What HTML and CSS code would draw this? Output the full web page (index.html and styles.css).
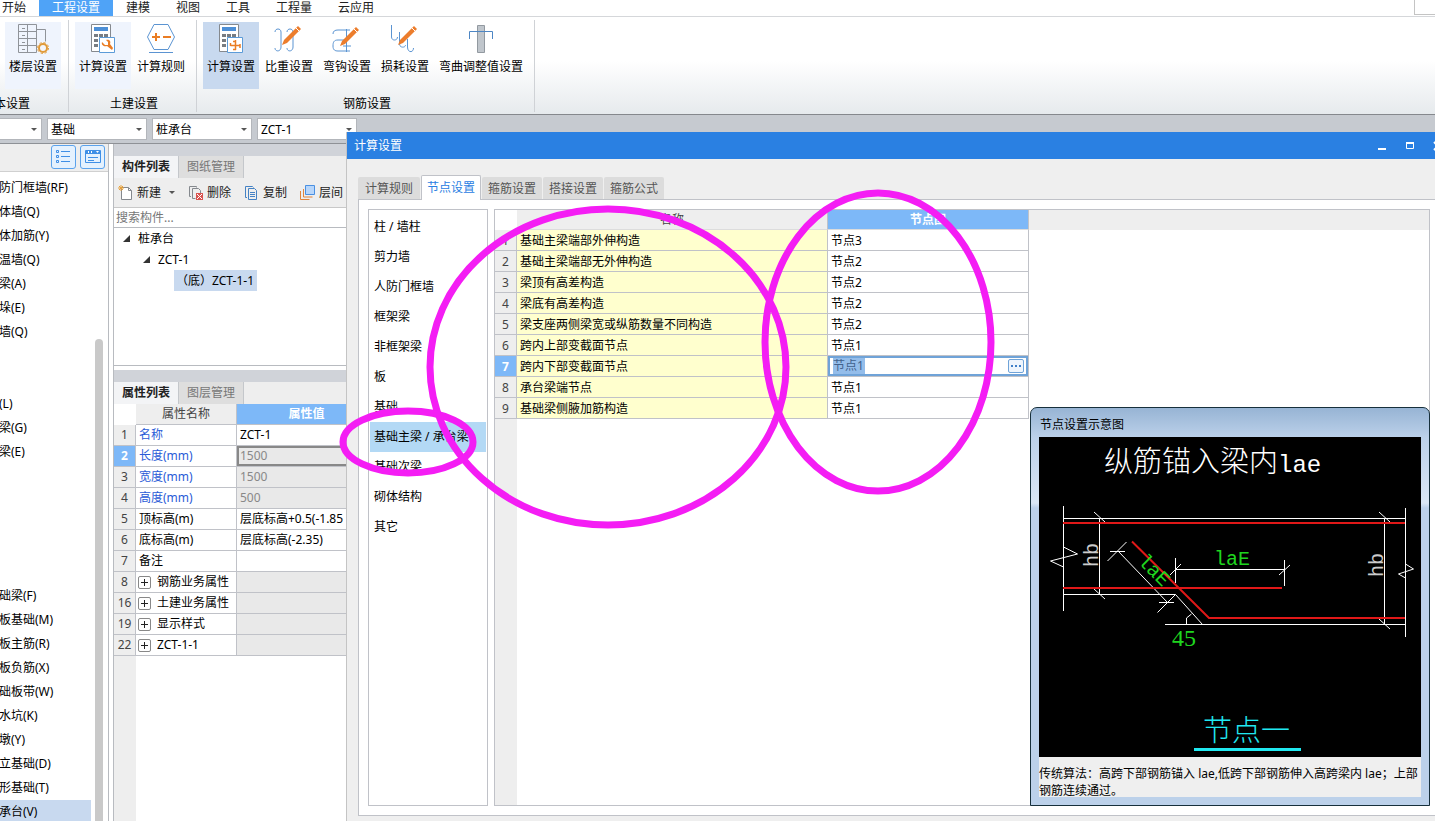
FILE: index.html
```html
<!DOCTYPE html>
<html lang="zh-CN">
<head>
<meta charset="utf-8">
<title>计算设置</title>
<link rel="stylesheet" href="styles.css">
</head>
<body>
<div class="app">
  <nav class="menu">
    <button class="menu-tab first">开始</button>
    <button class="menu-tab active">工程设置</button>
    <button class="menu-tab">建模</button>
    <button class="menu-tab">视图</button>
    <button class="menu-tab">工具</button>
    <button class="menu-tab">工程量</button>
    <button class="menu-tab">云应用</button>
    <span class="menu-box"></span>
  </nav>

  <div class="ribbon">
    <section class="group group-basic">
      <div class="tools">
        <button class="tool soft">
          <svg width="32" height="32" viewBox="0 0 32 32" fill="none" stroke="#8f9399"><path d="M1.500.5h18v28h-18zM10.500.5v28M1.500 7.500h18M1.500 14.500h18M1.500 21.500h18M19.500 5.500h9v12M5 4.500h3M5 11.500h3M5 18.500h3M5 25.500h3"/><circle cx="26" cy="24" r="6" fill="#f4f6fb" stroke="none"/><circle cx="26" cy="24" r="4" stroke="#e09a38" stroke-width="2"/><circle cx="26" cy="24" r="5.500" stroke="#e09a38" stroke-dasharray="2.300 2"/></svg>
          <span>楼层设置</span>
        </button>
      </div>
      <h2 class="group-name cut">本设置</h2>
    </section>
    <section class="group">
      <div class="tools">
        <button class="tool soft">
          <svg width="32" height="32" viewBox="0 0 32 32" fill="none"><path d="M4.500.5h19v27h-19z" fill="#fff" stroke="#85898e"/><path d="M7 3h14v4H7z" fill="#4d8fd6"/><path d="M7 10h4v3H7zM12 10h4v3h-4zM17 10h4v3h-4zM7 15h4v3H7zM7 20h4v3H7z" fill="#777c82"/><path d="M12.500 13.500h15v15h-15z" fill="#fff" stroke="#5b9bd8"/><path d="M15 18l3 3h3v-3l-2-2c4-1 5 2 4 4l3 4-1 2-5-4c-3 1-6-1-5-4z" fill="#ea7d24"/></svg>
          <span>计算设置</span>
        </button>
        <button class="tool">
          <svg width="32" height="32" viewBox="0 0 32 32" fill="none"><path d="M9 .5h14l6.500 12.500L23 25.500H9L2.500 13zM4 28.500h24" stroke="#5b94d2"/><path d="M7 13h8M11 9v8M18 13h8" stroke="#ea7d24" stroke-width="2"/></svg>
          <span>计算规则</span>
        </button>
      </div>
      <h2 class="group-name">土建设置</h2>
    </section>
    <section class="group">
      <div class="tools">
        <button class="tool on">
          <svg width="32" height="32" viewBox="0 0 32 32" fill="none"><path d="M4.500.5h19v27h-19z" fill="#fff" stroke="#85898e"/><path d="M7 3h14v4H7z" fill="#4d8fd6"/><path d="M7 10h4v3H7zM12 10h4v3h-4zM17 10h4v3h-4zM7 15h4v3H7zM7 20h4v3H7z" fill="#777c82"/><path d="M12.500 13.500h15v15h-15z" fill="#fff" stroke="#5b9bd8"/><path d="M20.500 16v10M15.500 21.500h10M18 17.500h3M15.500 19v3M25 20v4M18 25.500h3" stroke="#ea7d24" stroke-width="1.500"/></svg>
          <span>计算设置</span>
        </button>
        <button class="tool">
          <svg width="32" height="32" viewBox="0 0 32 32" fill="none"><path d="M2 8c0-4 6-4 6 0v15c0 5-6 5-6 1M14 8c0-4 6-4 6 0v15c0 5-6 5-6 1" stroke="#5b94d2"/><path d="M9 21l2-5L25 2l3 3-14 14z" fill="#ec7d2c"/><path d="M23 4l3 3" stroke="#fff"/></svg>
          <span>比重设置</span>
        </button>
        <button class="tool">
          <svg width="32" height="32" viewBox="0 0 32 32" fill="none"><path d="M2 10c0-3 2-4 5-4h12M7 16h10M2 22c0-4 1-6 5-6M2 22c0 4 2 5 5 5h12M15.500 5v23M12 22h8" stroke="#5b94d2"/><path d="M9 22l2-5L25 3l3 3-14 14z" fill="#ec7d2c"/><path d="M23 5l3 3" stroke="#fff"/></svg>
          <span>弯钩设置</span>
        </button>
        <button class="tool">
          <svg width="32" height="32" viewBox="0 0 32 32" fill="none"><path d="M2.500 1v12c0 4 6 4 6 0M10.500 8v12c0 4 6 4 6 1M18.500 15v8c0 6 6 6 6 1" stroke="#5b94d2"/><path d="M9 21l2-5L25 2l3 3-14 14z" fill="#ec7d2c"/><path d="M23 4l3 3" stroke="#fff"/></svg>
          <span>损耗设置</span>
        </button>
        <button class="tool wide">
          <svg width="32" height="32" viewBox="0 0 32 32" fill="none"><path d="M12.500 1.500h7v27h-7z" fill="#c0c6cc" stroke="#9299a0"/><path d="M4.500 15V7.500h23V15" stroke="#4d86c4"/></svg>
          <span>弯曲调整值设置</span>
        </button>
      </div>
      <h2 class="group-name">钢筋设置</h2>
    </section>
  </div>

  <div class="filters">
    <label class="combo narrow"><select aria-label="楼层"><option></option></select></label>
    <label class="combo"><select aria-label="类别"><option>基础</option></select></label>
    <label class="combo"><select aria-label="构件类型"><option>桩承台</option></select></label>
    <label class="combo"><select aria-label="构件"><option>ZCT-1</option></select></label>
  </div>

  <div class="work">
    <aside class="side">
      <div class="side-head">
        <button class="view" aria-label="列表"><svg width="16" height="16" viewBox="0 0 16 16" fill="none" stroke="#3f8fe6"><path d="M.5 1.500h2v2h-2zM.5 6.500h2v2h-2zM.5 11.500h2v2h-2zM5 2.500h9M5 7.500h9M5 12.500h9"/></svg></button>
        <button class="view" aria-label="面板"><svg width="16" height="16" viewBox="0 0 16 16" fill="none" stroke="#3f8fe6"><path d="M.5 1.500h15v12H.5z"/><path d="M1 3h14" stroke-width="4"/><path d="M3 8.500h10M3 11.500h6"/><path d="M3 2h1v2H3zM6 2h1v2H6zM11 2h3l-1.500 2z" fill="#fff" stroke="none"/></svg></button>
      </div>
      <div class="side-body">
        <ul class="side-list">
          <li>防门框墙(RF)</li><li>体墙(Q)</li><li>体加筋(Y)</li><li>温墙(Q)</li><li>梁(A)</li><li>垛(E)</li><li>墙(Q)</li><li></li><li></li>
          <li>(L)</li><li>梁(G)</li><li>梁(E)</li><li></li><li></li><li></li><li></li><li></li>
          <li>础梁(F)</li><li>板基础(M)</li><li>板主筋(R)</li><li>板负筋(X)</li><li>础板带(W)</li><li>水坑(K)</li><li>墩(Y)</li><li>立基础(D)</li><li>形基础(T)</li><li class="sel">承台(V)</li>
        </ul>
        <div class="thumb"></div>
      </div>
    </aside>

    <div class="panels">
      <section class="panel">
        <div class="strip"></div>
        <div class="ptabs"><button class="ptab on">构件列表</button><button class="ptab">图纸管理</button></div>
        <div class="pbar">
          <button><svg width="16" height="16" viewBox="0 0 16 16" fill="none"><path d="M3.500 2.500h7l3 3v9h-10z" fill="#fff" stroke="#85898e"/><path d="M10.500 2.500v3h3" stroke="#85898e"/><path d="M3 0v6M0 3h6M1 1l4 4M5 1L1 5" stroke="#e8a13a"/></svg>新建<i class="caret"></i></button>
          <button><svg width="16" height="16" viewBox="0 0 16 16" fill="none"><path d="M3 11.500H1.500v-10h7v1M4.500 3.500h6l2 2v3M4.500 3.500v10h3" stroke="#85898e"/><path d="M8 8h7v7H8z" fill="#d9534f"/><path d="M9 9l5 5M14 9l-5 5" stroke="#fff"/></svg>删除</button>
          <button><svg width="16" height="16" viewBox="0 0 16 16" fill="none" stroke="#4582c4"><path d="M3 12.500H1.500v-11h7l1 1M4.500 3.500h6l2 2v9h-8zM6 7.500h5M6 9.500h5M6 11.500h5"/></svg>复制</button>
          <button><svg width="16" height="16" viewBox="0 0 16 16" fill="none"><path d="M5.500.5h9v9h-9z" fill="#b8d6fa" stroke="#4a90e2"/><path d="M3.500 4v8h9M.5 6v8.500h9" stroke="#e0843c"/></svg>层间</button>
        </div>
        <input class="search" type="text" placeholder="搜索构件..." aria-label="搜索构件">
        <ul class="tree">
          <li class="lv1"><i class="open"></i>桩承台</li>
          <li class="lv2"><i class="open"></i>ZCT-1</li>
          <li class="lv3"><span><b class="mid">（</b>底<b class="mid">）</b>ZCT-1-1</span></li>
        </ul>
      </section>
      <section class="panel grow">
        <div class="strip"></div>
        <div class="ptabs"><button class="ptab on">属性列表</button><button class="ptab">图层管理</button></div>
        <div class="gridwrap">
          <table class="grid props">
            <colgroup><col class="c-no"><col class="c-name"><col class="c-val"></colgroup>
            <thead><tr><th class="corner"></th><th>属性名称</th><th class="hot">属性值</th></tr></thead>
            <tbody>
              <tr><th>1</th><td class="blue">名称</td><td>ZCT-1</td></tr>
              <tr><th class="hot">2</th><td class="blue">长度(mm)</td><td class="dim focus">1500</td></tr>
              <tr><th>3</th><td class="blue">宽度(mm)</td><td class="dim">1500</td></tr>
              <tr><th>4</th><td class="blue">高度(mm)</td><td class="dim">500</td></tr>
              <tr><th>5</th><td>顶标高(m)</td><td>层底标高+0.5(-1.85</td></tr>
              <tr><th>6</th><td>底标高(m)</td><td>层底标高(-2.35)</td></tr>
              <tr><th>7</th><td>备注</td><td></td></tr>
              <tr><th>8</th><td class="fold"><button aria-label="展开"></button>钢筋业务属性</td><td class="dim"></td></tr>
              <tr><th>16</th><td class="fold"><button aria-label="展开"></button>土建业务属性</td><td class="dim"></td></tr>
              <tr><th>19</th><td class="fold"><button aria-label="展开"></button>显示样式</td><td class="dim"></td></tr>
              <tr><th>22</th><td class="fold"><button aria-label="展开"></button>ZCT-1-1</td><td class="dim"></td></tr>
            </tbody>
          </table>
        </div>
      </section>
    </div>
  </div>
</div>

<div class="dialog" role="dialog" aria-labelledby="dlg-title">
  <header class="dlg-head">
    <h1 id="dlg-title">计算设置</h1>
    <button aria-label="最小化"><svg width="10" height="10" viewBox="0 0 10 10"><path d="M1 7h8v2H1z" fill="#fff"/></svg></button>
    <button aria-label="最大化"><svg width="10" height="10" viewBox="0 0 10 10" fill="none" stroke="#fff"><path d="M1.500 2.500h7v5h-7z"/><path d="M1 2h8" stroke-width="2"/></svg></button>
    <button class="close" aria-label="关闭"><svg width="10" height="10" viewBox="0 0 10 10" stroke="#fff" stroke-width="2"><path d="M1 1l8 8M9 1l-8 8"/></svg></button>
  </header>
  <div class="dlg-body">
    <div class="dtabs">
      <button class="dtab">计算规则</button><button class="dtab on">节点设置</button><button class="dtab">箍筋设置</button><button class="dtab">搭接设置</button><button class="dtab">箍筋公式</button>
    </div>
    <div class="pane">
      <ul class="kinds">
        <li>柱 / 墙柱</li><li>剪力墙</li><li>人防门框墙</li><li>框架梁</li><li>非框架梁</li><li>板</li><li>基础</li><li class="sel">基础主梁 / 承台梁</li><li>基础次梁</li><li>砌体结构</li><li>其它</li>
      </ul>
      <div class="gridwrap nodes-wrap">
        <table class="grid nodes">
          <colgroup><col class="c-no"><col class="c-item"><col class="c-node"><col></colgroup>
          <thead><tr><th class="corner"></th><th>名称</th><th class="hot">节点图</th><th></th></tr></thead>
          <tbody>
            <tr><th>1</th><td>基础主梁端部外伸构造</td><td>节点3</td></tr>
            <tr><th>2</th><td>基础主梁端部无外伸构造</td><td>节点2</td></tr>
            <tr><th>3</th><td>梁顶有高差构造</td><td>节点2</td></tr>
            <tr><th>4</th><td>梁底有高差构造</td><td>节点2</td></tr>
            <tr><th>5</th><td>梁支座两侧梁宽或纵筋数量不同构造</td><td>节点2</td></tr>
            <tr><th>6</th><td>跨内上部变截面节点</td><td>节点1</td></tr>
            <tr><th class="hot">7</th><td>跨内下部变截面节点</td><td class="edit"><div><input type="text" value="节点1" aria-label="节点图"><button aria-label="选择"><svg width="10" height="2" viewBox="0 0 10 2"><path d="M0 0h2v2H0zM4 0h2v2H4zM8 0h2v2H8z" fill="#3f7fc8"/></svg></button></div></td></tr>
            <tr><th>8</th><td>承台梁端节点</td><td>节点1</td></tr>
            <tr><th>9</th><td>基础梁侧腋加筋构造</td><td>节点1</td></tr>
          </tbody>
        </table>
      </div>
    </div>
  </div>

  <aside class="preview">
    <h2>节点设置示意图</h2>
    <svg class="cad" viewBox="0 0 382 320" fill="none" stroke="#fff">
      <rect width="382" height="320" fill="#000" stroke="none"/>
      <path d="M24.500 69v105M24.500 110l14 7-27 7 13 6M24.500 81.500h342M60.500 81v77M55 75l11 10M55 152l11 10M366.500 71v129M366.500 127l8 5-15 5 7 4M345.500 81v107M340 75l11 10M340 182l11 10M24.500 157.500h112l27 30M126 187.500h240M147.500 187v-6l5-4"/>
      <path d="M136.500 121v25M245.500 123v26M136.500 132.500h109M131 138l11-11M240 138l11-10M79.500 114.500l49 51M68.500 124l19-19M71 114.500h15M118.500 175.500l18-18M120 165.500h15"/>
      <g stroke="#e01818" stroke-width="2"><path d="M24 86h342M24 151h219M93 104.500l77 76.500h196"/></g>
      <g stroke="none" fill="#fff">
        <text class="cad-title" x="65" y="35">纵筋锚入梁内<tspan class="cad-lat">lae</tspan></text>
        <g fill="#ccc">
          <text class="cad-dim" transform="translate(59 130) rotate(-90)">hb</text>
          <text class="cad-dim" transform="translate(344 140) rotate(-90)">hb</text>
        </g>
        <g fill="#1fd51f">
          <text class="cad-dim" x="175" y="128">laE</text>
          <text class="cad-dim" transform="translate(98 125) rotate(45)">laE</text>
          <text class="cad-num" x="133" y="209">45</text>
        </g>
        <text class="cad-title" x="164" y="304" fill="#20e8f0">节点一</text>
      </g>
      <path d="M155 312.500h107" stroke="#20e8f0" stroke-width="3"/>
    </svg>
    <p>传统算法<b class="mid">：</b>高跨下部钢筋锚入 lae,低跨下部钢筋伸入高跨梁内 lae<b class="mid">；</b>上部钢筋连续通过。</p>
  </aside>
</div>

<svg class="marks" fill="none" stroke="#f41df4" stroke-width="7">
  <ellipse cx="608" cy="367" rx="178" ry="158"/>
  <ellipse cx="878" cy="342" rx="113" ry="149"/>
  <ellipse cx="408" cy="442" rx="65" ry="31"/>
</svg>
</body>
</html>
```
FILE: styles.css
```css
* { box-sizing: border-box; }
html, body { height: 100%; }
body {
  margin: 0;
  overflow: hidden;
  position: relative;
  background: #fff;
  color: #000;
  font: 12px/16px "Noto Sans", "Noto Sans CJK SC", sans-serif;
  text-spacing-trim: space-all;
}
button, input, select { font: inherit; color: inherit; margin: 0; padding: 0; border: 0; background: none; border-radius: 0; white-space: nowrap; }
ul { list-style: none; margin: 0; padding: 0; }
h1, h2, p { margin: 0; font: inherit; }
svg { display: block; flex: none; }
.mid { font-family: "Noto Sans CJK TC", sans-serif; font-weight: normal; }

.app { height: 100%; display: flex; flex-direction: column; }

/* menu */
.menu { display: flex; height: 17px; border-bottom: 1px solid #d5d7da; flex: none; }
.menu-tab { padding: 0 13px; line-height: 16px; color: #222; }
.menu-tab.first { margin-left: -11px; }
.menu-tab.active { background: #4fa3f7; color: #fff; }
.menu-box { margin-left: auto; width: 21px; height: 15px; border: solid #c4c4c4; border-width: 0 0 1px 1px; }

/* ribbon */
.ribbon { display: flex; flex: none; height: 98px; background: linear-gradient(#fff 45%, #e6eaed); border-bottom: 1px solid #85888d; }
.group { display: flex; flex-direction: column; justify-content: space-between; margin: 3px 0 2px; padding: 2px 7px 0 6px; border-right: 1px solid #cfd2d6; }
.group-basic { padding-left: 5px; }
.tools { display: flex; gap: 2px; }
.tool { width: 56px; height: 67px; padding-top: 2px; display: flex; flex-direction: column; align-items: center; gap: 3px; }
.tool.wide { width: 92px; }
.tool.soft { background: #eff4fd; }
.tool.on { background: #c8d9ef; }
.group-name { text-align: center; padding-left: 4px; }
.group-name.cut { text-align: left; margin-left: -11px; padding-left: 0; }

/* filters */
.filters { display: flex; gap: 5px; flex: none; height: 29px; padding: 3px 0; background: #c6cad0; border-bottom: 1px solid #8e9196; }
.combo { width: 100px; position: relative; background: #fff; border: 1px solid #b3b6bb; }
.combo.narrow { width: 42px; border-left: 0; }
.combo select { appearance: none; width: 100%; height: 100%; padding: 2px 3px 0; }
.combo::after { content: ""; position: absolute; right: 4px; top: 9px; border: 3px solid transparent; border-top-color: #555; border-bottom: 0; }

/* workspace */
.work { display: flex; gap: 4px; flex: 1; min-height: 0; }
.side { width: 109px; flex: none; display: flex; flex-direction: column; border-right: 1px solid #b8bbc0; }
.side-head { display: flex; justify-content: flex-end; gap: 4px; height: 28px; padding: 1px 3px 0 0; background: #eee; border-bottom: 1px solid #d0d0d0; }
.view { width: 25px; height: 24px; display: flex; align-items: center; justify-content: center; border: 1px solid #5aa2ec; border-radius: 3px; background: #e4f1fe; }
.side-body { flex: 1; min-height: 0; display: flex; gap: 4px; overflow: hidden; }
.side-list { width: 91px; padding-top: 4px; }
.side-list li { height: 24px; line-height: 24px; text-indent: -1px; white-space: nowrap; }
.side-list .sel { background: #c8d9ef; }
.thumb { width: 8px; margin-top: 167px; border-radius: 4px 4px 0 0; background: #c9c9c9; }

.panels { width: 234px; flex: none; display: flex; flex-direction: column; gap: 4px; min-height: 0; border-left: 1px solid #b8bbc0; overflow: hidden; }
.panel { display: flex; flex-direction: column; border-bottom: 1px solid #b8bbc0; }
.panel.grow { flex: 1; min-height: 0; border-bottom: 0; }
.strip { height: 12px; background: #d0d3d9; flex: none; }
.ptabs { display: flex; height: 22px; flex: none; background: #eee; }
.ptab { width: 65px; border-right: 1px solid #c4c7cb; background: #dedede; color: #777; line-height: 22px; }
.ptab.on { background: #f3f4f6; color: #222; font-weight: bold; }
.panel > .pbar { display: flex; gap: 13px; height: 30px; padding: 0 4px; background: #eee; border-bottom: 1px solid #c8c8c8; color: #222; }
.pbar button { display: flex; align-items: center; gap: 3px; }
.caret { margin-left: 5px; border: 3px solid transparent; border-top-color: #555; border-bottom: 0; }
.search { height: 20px; padding: 0 2px; border-bottom: 1px solid #b8bbc0; }
.search::placeholder { color: #777; opacity: 1; }
.tree { height: 137px; }
.tree li { display: flex; align-items: center; gap: 8px; height: 21px; line-height: 20px; }
.tree .lv1 { padding-left: 9px; }
.tree .lv2 { padding-left: 29px; }
.tree .lv3 { padding-left: 60px; }
.tree .lv3 span { background: #c8d9ef; padding: 0 3px 0 2px; }
.open { border: solid transparent; border-width: 0 0 7px 7px; border-bottom-color: #333; }

/* grids */
.gridwrap { flex: 1; min-height: 0; background: linear-gradient(to right, #eee 22px, #fff 22px); }
.grid { width: 100%; table-layout: fixed; border-collapse: separate; border-spacing: 0; line-height: 18px; }
.grid.props { width: 263px; }
.grid th, .grid td { height: 21px; padding: 0 3px; border: solid #c0c2c8; border-width: 0 1px 1px 0; text-align: left; white-space: nowrap; overflow: hidden; }
.grid th { padding: 0; background: #eee; font-weight: normal; text-align: center; color: #444; }
.grid th.corner { background: #fff; border-color: transparent; }
.grid th.hot { background: #7db8f8; color: #fff; font-weight: bold; }
.c-no { width: 22px; }
.c-name { width: 101px; }
.c-val { width: 140px; }
.c-item { width: 311px; }
.c-node { width: 201px; }
.grid .blue { color: #2a5bd7; }
.grid .dim { background: #e9e9e9; color: #888; }
.grid .focus { box-shadow: inset 0 0 0 2px #888; }
.grid .fold { padding-left: 2px; }
.fold button { width: 13px; height: 13px; margin-right: 6px; vertical-align: -2px; border: 1px solid #888; border-radius: 2px; background: linear-gradient(#222, #222) center / 7px 1px no-repeat, linear-gradient(#222, #222) center / 1px 7px no-repeat, #fff; }

/* dialog */
.dialog { position: absolute; left: 346px; top: 132px; right: 0; bottom: 0; display: flex; flex-direction: column; background: #efefef; border-left: 1px solid #c4c4c4; overflow: hidden; }
.dlg-head { display: flex; align-items: center; gap: 18px; height: 27px; flex: none; margin-left: -1px; padding-left: 8px; background: #2a80e2; color: #fff; }
.dlg-head h1 { flex: 1; }
.dlg-head .close { margin-right: -8px; }
.dlg-body { flex: 1; min-height: 0; display: flex; flex-direction: column; padding: 16px 0 5px 11px; }
.dtabs { display: flex; align-items: flex-end; gap: 1px; height: 25px; margin-bottom: -1px; position: relative; flex: none; }
.dtab { width: 60px; height: 22px; margin-bottom: 1px; padding-top: 2px; background: #dcdcdc; border-radius: 2px 2px 0 0; color: #555; }
.dtab:first-child { width: 62px; }
.dtab.on { height: 25px; margin-bottom: 0; padding-top: 0; background: #fff; border: 1px solid #c0c2c8; border-bottom: 0; color: #2a80e2; }
.pane { flex: 1; min-height: 0; display: flex; gap: 6px; padding: 9px 5px 9px 9px; background: #fff; border: solid #c0c2c8; border-width: 1px 0 1px 1px; }
.kinds { width: 120px; flex: none; padding: 2px 1px; border: 1px solid #c0c2c8; }
.kinds li { height: 30px; line-height: 30px; padding-left: 4px; white-space: nowrap; }
.kinds .sel { background: #b3d9f5; }
.nodes-wrap { border: 1px solid #c0c2c8; overflow: hidden; }
.nodes thead th { height: 20px; border-bottom-color: #dcdcdc; }
.nodes td, .nodes th { padding-top: 1px; }
.nodes thead th:last-child { border-color: transparent; }
.nodes td:nth-child(2) { background: #ffffce; }
.grid .edit { padding: 0; }
.edit div { display: flex; align-items: center; justify-content: space-between; height: 20px; padding: 0 2px 0 3px; border: 2px solid #6fa3d8; }
.edit input { width: 32px; height: 16px; background: #94bdea; color: #41618c; }
.edit button { width: 16px; height: 14px; display: flex; align-items: center; justify-content: center; border: 1px solid #6fa3d8; border-radius: 2px; background: #eef5fd; }

/* preview window */
.preview { position: absolute; right: 5px; bottom: 15px; width: 400px; padding: 0 8px 8px; border: 1px solid #17303c; border-radius: 7px 7px 0 0; background: linear-gradient(#97b4d4, #bcd1ea 30px, #dbe7f5 95px, #bcd1ea 100px); }
.preview h2 { height: 29px; line-height: 34px; padding-left: 1px; }
.cad { width: 100%; height: auto; }
.preview p { padding: 7px 0 0; height: 40px; line-height: 17px; background: #efefef; }
.cad-title { font: 300 29px "Noto Sans CJK SC", sans-serif; }
.cad-lat { font: 24px "Liberation Mono", monospace; }
.cad-dim { font: 20px "Liberation Mono", monospace; }
.cad-num { font: 24px "Liberation Serif", serif; }

/* pen marks over the window */
.marks { position: absolute; inset: 0; width: 100%; height: 100%; pointer-events: none; }
```
